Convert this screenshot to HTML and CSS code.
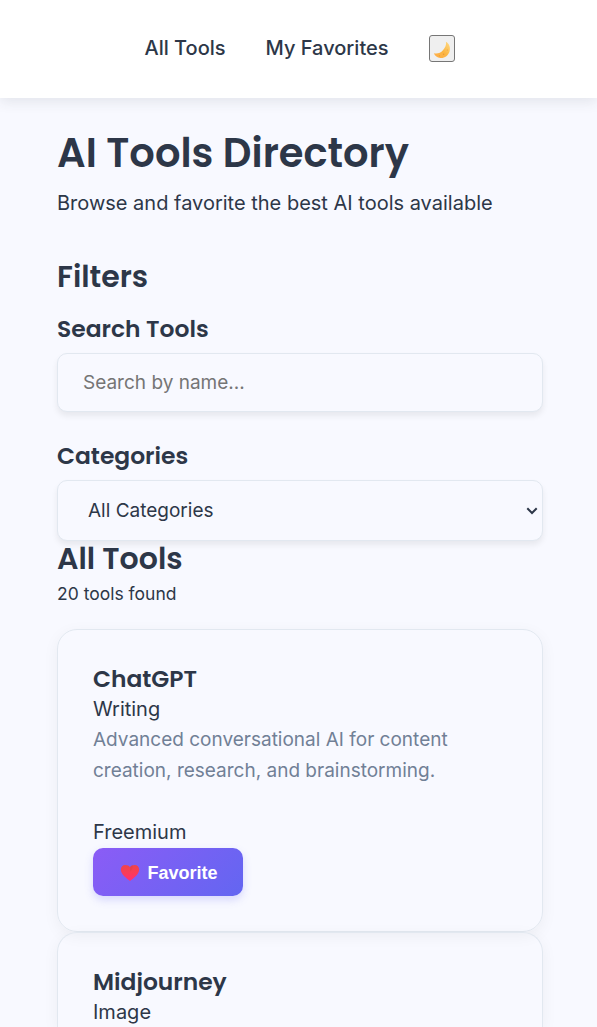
FILE: index.html
```html
<!DOCTYPE html>
<html lang="en">
<head>
<meta charset="utf-8">
<title>AI Tools Directory</title>
<link rel="stylesheet" href="styles.css">
</head>
<body>
<header class="navbar">
  <a class="nav-link" href="#">All Tools</a>
  <a class="nav-link favorites" href="#">My Favorites</a>
  <button class="theme-toggle" aria-label="Toggle theme">
    <svg width="18" height="18" viewBox="0 0 17 17"><defs><linearGradient id="moon" x1="0" y1="1" x2="1" y2="0"><stop offset="0" stop-color="#ffad48"/><stop offset=".5" stop-color="#fbb643"/><stop offset="1" stop-color="#ffdc88"/></linearGradient></defs><path d="M12.200.8C15.300 2.500 16.700 6 15.700 9.600C14.500 13.900 10.700 16.500 6.800 16C4 15.700 2 14.200.8 11.500C4 12.200 7.200 11.400 9.400 8.700C11.400 6.300 12.900 3.700 12.200.8Z" fill="url(#moon)"/><g fill="#e99837"><circle cx="6" cy="14" r=".6"/><circle cx="10" cy="12.500" r=".7"/><circle cx="13.500" cy="8.500" r=".5"/></g></svg>
  </button>
</header>
<main class="page">
  <h1 class="page-title">AI Tools Directory</h1>
  <p class="intro">Browse and favorite the best AI tools available</p>
  <h2 class="section-title">Filters</h2>
  <h3 class="label search-label">Search Tools</h3>
  <input class="field" type="text" placeholder="Search by name...">
  <h3 class="label category-label">Categories</h3>
  <div class="select-wrap">
    <select class="field select"><option>All Categories</option></select>
    <svg class="chevron" width="12" height="8" viewBox="0 0 12 8"><path d="M1.300 1.300L6 6L10.700 1.300" fill="none" stroke="#2d3748" stroke-width="2"/></svg>
  </div>
  <h2 class="section-title list-title">All Tools</h2>
  <p class="count">20 tools found</p>
  <article class="card">
    <h3 class="card-title">ChatGPT</h3>
    <p class="category">Writing</p>
    <p class="description">Advanced conversational AI for content creation, research, and brainstorming.</p>
    <p class="price">Freemium</p>
    <button class="favorite"><svg width="20" height="18" viewBox="0 0 20 18"><defs><linearGradient id="heart" x1="0" y1="0" x2="0" y2="1"><stop offset="0" stop-color="#f0444b"/><stop offset=".5" stop-color="#fa3c58"/><stop offset="1" stop-color="#ff2d78"/></linearGradient></defs><path d="M10 17C7 14.800.8 10.500.8 5.600C.8 2.800 2.800 1 5.200 1C7.400 1 9.200 1.900 10 3.200C10.800 1.900 12.600 1 14.800 1C17.200 1 19.200 2.800 19.200 5.600C19.200 10.500 13 14.800 10 17Z" fill="url(#heart)"/><path d="M10 3.200L10.300 7.500C12 6 13 3.500 12.700 1.300C11.500 1.500 10.500 2.200 10 3.200Z" fill="#d33c48" opacity=".35"/></svg><span>Favorite</span></button>
  </article>
  <article class="card">
    <h3 class="card-title">Midjourney</h3>
    <p class="category">Image</p>
  </article>
</main>
</body>
</html>
```
FILE: styles.css
```css
* { box-sizing: border-box; margin: 0; }
html { overflow: hidden; }
body {
  height: 1027px;
  overflow: hidden;
  background: #f8f9ff;
  color: #2d3748;
  font: 20px/31px Inter, sans-serif;
}
.navbar {
  display: flex;
  justify-content: center;
  align-items: center;
  height: 98px;
  padding: 0 0 2px 2px;
  background: #fff;
  box-shadow: 0 4px 12px rgba(45, 55, 72, .1);
}
.nav-link { color: inherit; font-weight: 500; text-decoration: none; }
.favorites { margin: 0 40px; }
.theme-toggle {
  display: flex;
  align-items: flex-end;
  justify-content: flex-end;
  width: 26px;
  height: 27px;
  padding: 0 3px 2px 0;
  border: 1px solid #767676;
  border-radius: 3px;
  background: #efefef;
}
.page { padding: 28px 54px 0 57px; }
h1, h2, h3 {
  font-family: Poppins, Inter, sans-serif;
  font-weight: 600;
}
.page-title { font-size: 40px; line-height: 54px; white-space: nowrap; }
.intro { margin-top: 8px; }
.section-title { margin-top: 38px; font-size: 30px; line-height: 40px; }
.label { font-size: 23.4px; line-height: 32px; }
.search-label { margin-top: 16px; }
.field {
  display: block;
  width: 486px;
  height: 59px;
  margin-top: 8px;
  padding: 0 25px;
  border: 1px solid #e2e8f0;
  border-radius: 10px;
  background: #f8f9ff;
  color: #2d3748;
  font: 19px Inter, sans-serif;
  box-shadow: 0 4px 6px rgba(0, 0, 0, .07);
}
.field::placeholder { color: #757575; opacity: 1; }
.category-label { margin-top: 28px; }
.select-wrap { position: relative; margin-top: 8px; }
.select { appearance: none; height: 61px; margin-top: 0; padding: 0 30px; }
.chevron { position: absolute; right: 5px; top: 27px; }
.list-title { margin-top: -2px; }
.count { margin-top: -1px; margin-bottom: 20px; font-size: 17.5px; }
.card {
  width: 486px;
  height: 303px;
  padding: 35px;
  border: 1px solid #e2e8f0;
  border-radius: 20px;
  box-shadow: 0 4px 16px rgba(0, 0, 0, .05);
}
.card:last-child { height: 95px; padding-bottom: 0; border-bottom: 0; border-radius: 20px 20px 0 0; }
.card-title { font-size: 23.4px; line-height: 28px; }
.category { padding-top: 1px; line-height: 30px; }
.description { color: #718096; font-size: 19px; }
.price { margin-top: 31px; }
.favorite {
  display: flex;
  align-items: center;
  justify-content: center;
  gap: 7px;
  width: 150px;
  height: 48px;
  padding: 2px 0 0 2px;
  border: 0;
  border-radius: 10px;
  background: linear-gradient(135deg, #8b5cf6, #6366f1);
  color: #fff;
  font: bold 18px "Liberation Sans", Arial, sans-serif;
  box-shadow: 0 4px 8px rgba(99, 102, 241, .22);
}
```
